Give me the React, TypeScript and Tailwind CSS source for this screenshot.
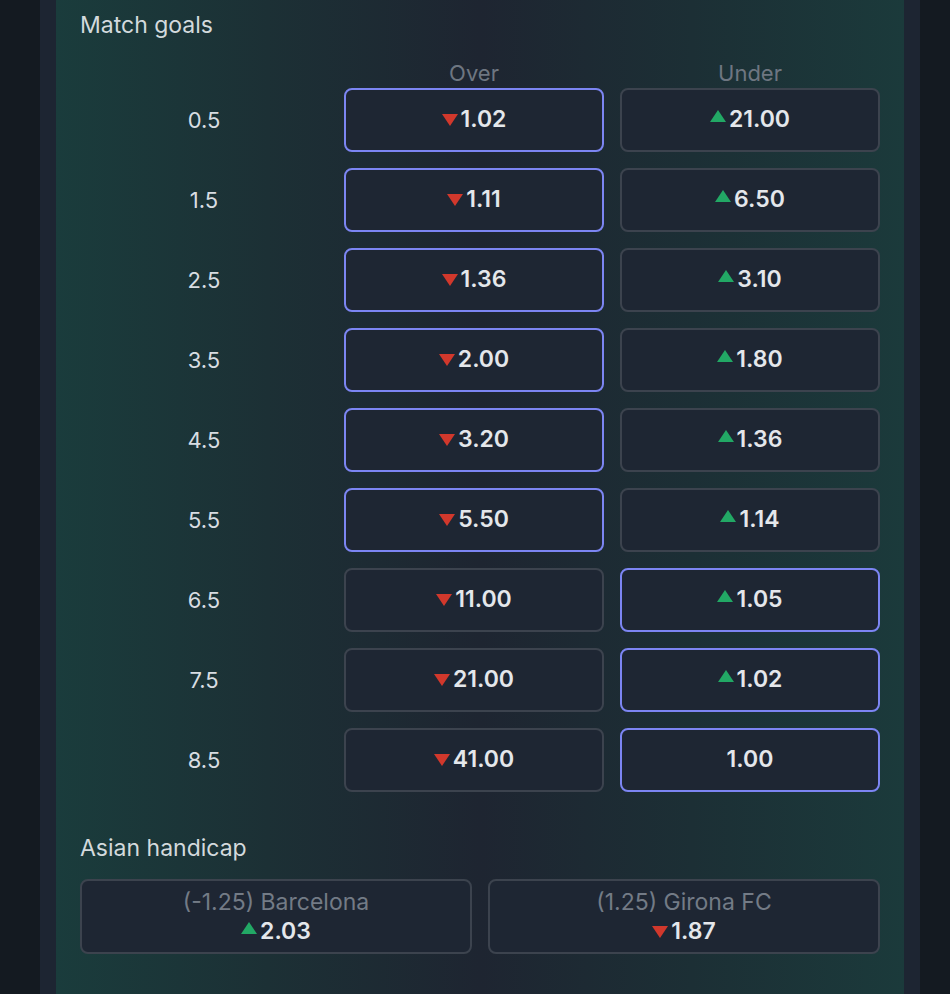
type Trend = 'up' | 'down' | null;

interface Odd {
  value: string;
  trend: Trend;
  selected: boolean;
}

const goals: { line: string; over: Odd; under: Odd }[] = [
  { line: '0.5', over: { value: '1.02', trend: 'down', selected: true }, under: { value: '21.00', trend: 'up', selected: false } },
  { line: '1.5', over: { value: '1.11', trend: 'down', selected: true }, under: { value: '6.50', trend: 'up', selected: false } },
  { line: '2.5', over: { value: '1.36', trend: 'down', selected: true }, under: { value: '3.10', trend: 'up', selected: false } },
  { line: '3.5', over: { value: '2.00', trend: 'down', selected: true }, under: { value: '1.80', trend: 'up', selected: false } },
  { line: '4.5', over: { value: '3.20', trend: 'down', selected: true }, under: { value: '1.36', trend: 'up', selected: false } },
  { line: '5.5', over: { value: '5.50', trend: 'down', selected: true }, under: { value: '1.14', trend: 'up', selected: false } },
  { line: '6.5', over: { value: '11.00', trend: 'down', selected: false }, under: { value: '1.05', trend: 'up', selected: true } },
  { line: '7.5', over: { value: '21.00', trend: 'down', selected: false }, under: { value: '1.02', trend: 'up', selected: true } },
  { line: '8.5', over: { value: '41.00', trend: 'down', selected: false }, under: { value: '1.00', trend: null, selected: true } },
];

function Arrow({ trend }: { trend: Trend }) {
  if (trend === 'up') {
    return (
      <svg width="16" height="12" viewBox="0 0 16 12" className="mr-[3px] -translate-y-[3px]">
        <path d="M8 0 L16 12 L0 12 Z" fill="#22a865" />
      </svg>
    );
  }
  if (trend === 'down') {
    return (
      <svg width="16" height="12" viewBox="0 0 16 12" className="mr-[3px] translate-y-[1px]">
        <path d="M0 0 L16 0 L8 12 Z" fill="#d1382c" />
      </svg>
    );
  }
  return null;
}

function OddButton({ odd }: { odd: Odd }) {
  return (
    <button
      className={`h-16 rounded-[8px] border-2 bg-[#1e2633] flex items-center justify-center pb-[2px] ${
        odd.selected ? 'border-[#7c85f2]' : 'border-[#3c434e]'
      }`}
    >
      <Arrow trend={odd.trend} />
      <span className="text-[23px] font-semibold text-[#e4e7eb] leading-none">{odd.value}</span>
    </button>
  );
}

export default function App() {
  return (
    <div
      className="min-h-screen bg-[#141a21] flex justify-start pl-10 pr-[30px]"
      style={{ fontFamily: 'Inter, "Noto Sans", sans-serif' }}
    >
      <div className="w-[880px] bg-[#1d2532] px-4">
        <div className="min-h-[994px] bg-[linear-gradient(to_right,#1a3c3c_0%,#1c3035_25%,#1e2531_50%,#1c2f35_75%,#1b3a3b_100%)] px-6">
          {/* Match goals */}
          <h2 className="text-[23px] text-[#d3dadd] leading-none pt-[14px]">Match goals</h2>
          <div className="grid grid-cols-[248px_260px_260px] gap-x-4 mt-[25px]">
            <div />
            <div className="text-center text-[22px] text-[#6e7681] leading-none">Over</div>
            <div className="text-center text-[22px] text-[#6e7681] leading-none">Under</div>
          </div>
          <div className="grid grid-cols-[248px_260px_260px] gap-x-4 gap-y-4 mt-[4px]">
            {goals.map((g) => (
              <div key={g.line} className="contents">
                <div className="flex items-center justify-center text-[22px] text-[#d8dde2]">{g.line}</div>
                <OddButton odd={g.over} />
                <OddButton odd={g.under} />
              </div>
            ))}
          </div>

          {/* Asian handicap */}
          <h2 className="text-[23px] text-[#d3dadd] leading-none mt-[45px]">Asian handicap</h2>
          <div className="grid grid-cols-2 gap-4 mt-[19px]">
            {[
              { label: '(-1.25) Barcelona', value: '2.03', trend: 'up' as Trend },
              { label: '(1.25) Girona FC', value: '1.87', trend: 'down' as Trend },
            ].map((h) => (
              <button
                key={h.label}
                className="h-[75px] rounded-[8px] border-2 border-[#3c434e] bg-[#1e2633] flex flex-col items-center justify-center pb-[2px]"
              >
                <span className="text-[23px] text-[#737b86] leading-[30px]">{h.label}</span>
                <span className="flex items-center">
                  <Arrow trend={h.trend} />
                  <span className="text-[23px] font-semibold text-[#e4e7eb] leading-[28px]">{h.value}</span>
                </span>
              </button>
            ))}
          </div>
        </div>
      </div>
    </div>
  );
}
